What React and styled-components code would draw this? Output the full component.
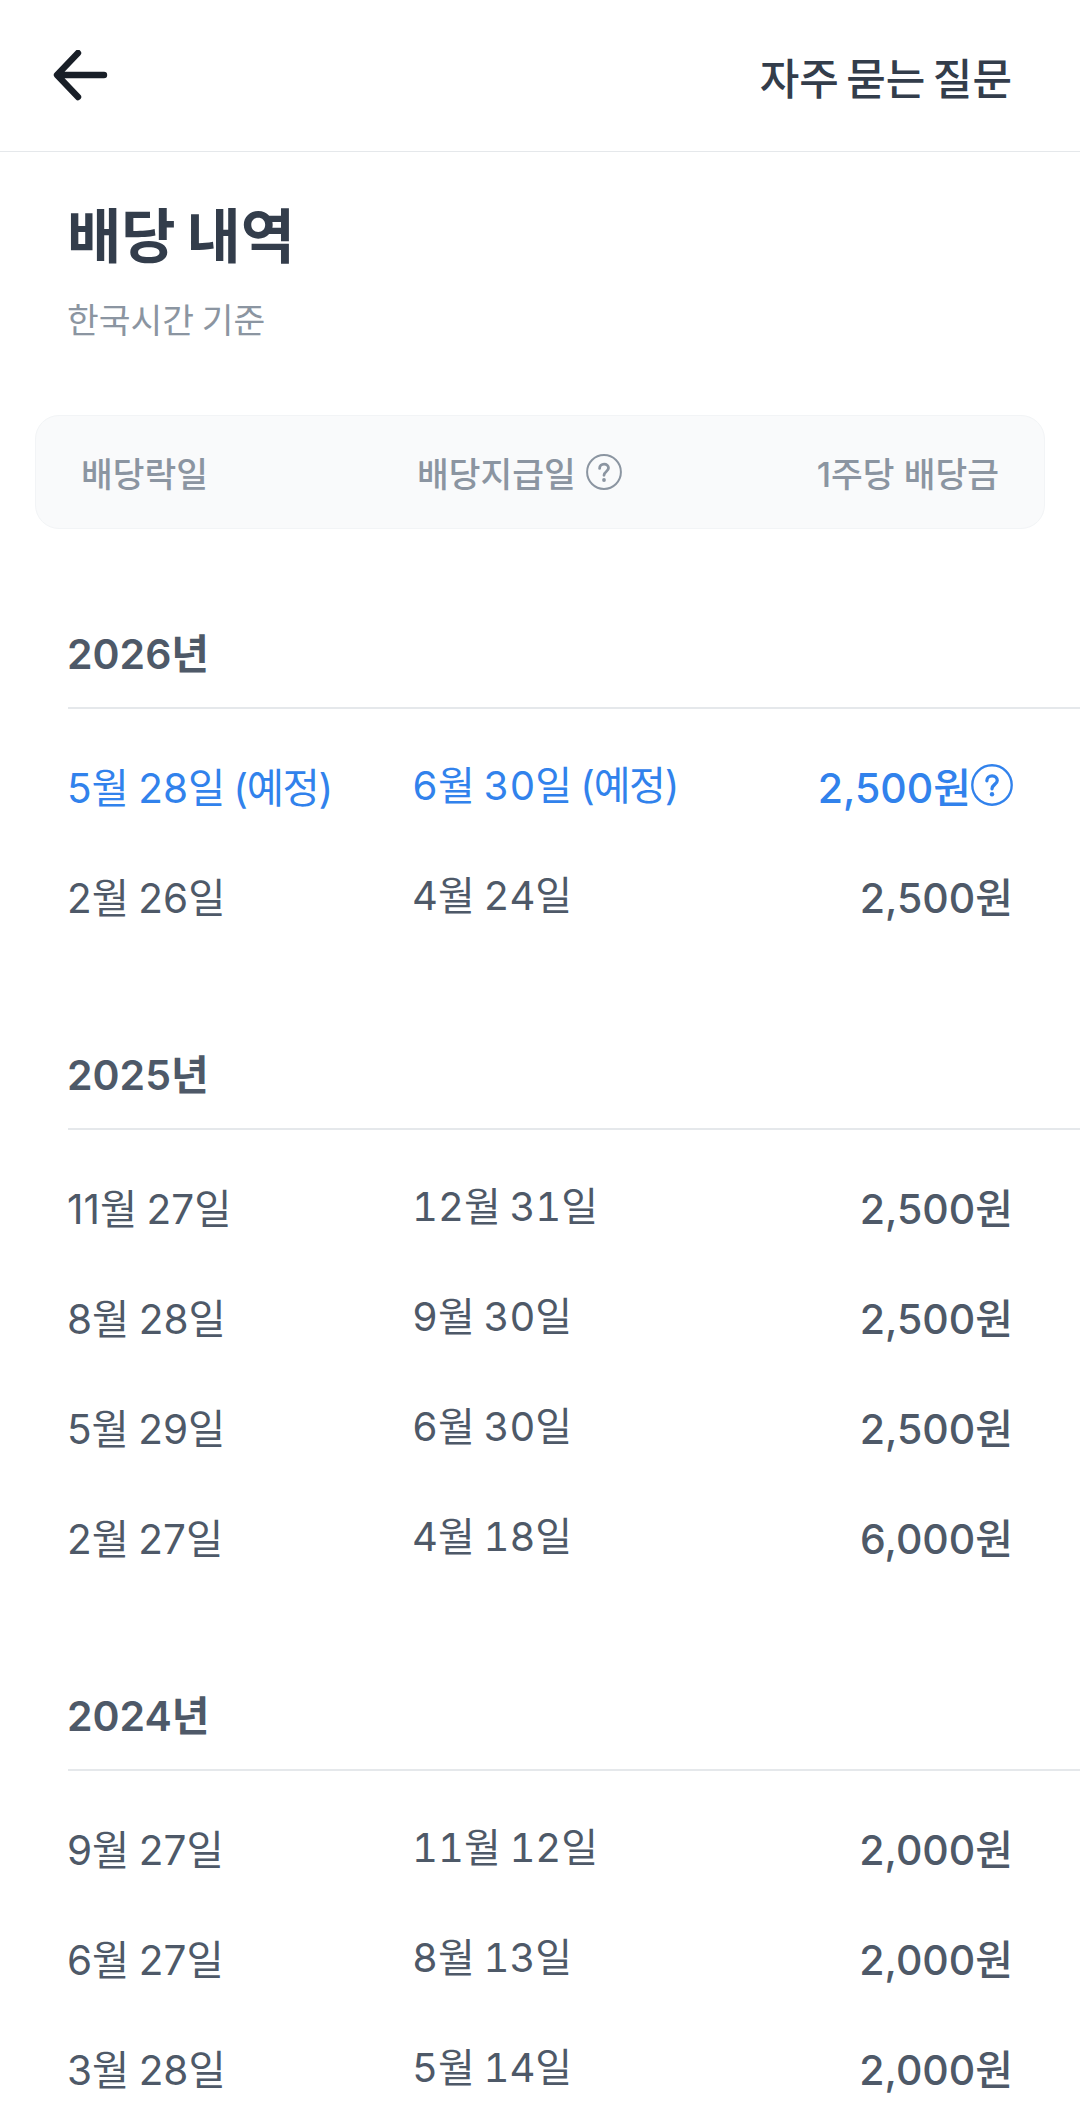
import React from 'react';
import styled, { createGlobalStyle } from 'styled-components';

const GlobalStyle = createGlobalStyle`
  html, body {
    margin: 0;
    padding: 0;
    height: 2120px;
    overflow: hidden;
    background: #fff;
    font-family: Inter, "Noto Sans CJK KR", sans-serif;
  }
`;

const sections = [
  {
    year: '2026년',
    rows: [
      { ex: '5월 28일', pay: '6월 30일', amount: '2,500원', planned: true },
      { ex: '2월 26일', pay: '4월 24일', amount: '2,500원' },
    ],
  },
  {
    year: '2025년',
    rows: [
      { ex: '11월 27일', pay: '12월 31일', amount: '2,500원' },
      { ex: '8월 28일', pay: '9월 30일', amount: '2,500원' },
      { ex: '5월 29일', pay: '6월 30일', amount: '2,500원' },
      { ex: '2월 27일', pay: '4월 18일', amount: '6,000원' },
    ],
  },
  {
    year: '2024년',
    rows: [
      { ex: '9월 27일', pay: '11월 12일', amount: '2,000원' },
      { ex: '6월 27일', pay: '8월 13일', amount: '2,000원' },
      { ex: '3월 28일', pay: '5월 14일', amount: '2,000원' },
    ],
  },
];

const HelpIcon = ({ size, color }) => (
  <svg width={size} height={size} viewBox="0 0 36 36" fill="none">
    <circle cx="18" cy="18" r="16.9" stroke={color} strokeWidth="2" />
    <path d="M13.6 14.4c0-2.5 2-4.2 4.5-4.2s4.4 1.6 4.4 3.9c0 3.4-4.5 3.4-4.5 7.2" stroke={color} strokeWidth="2.8" strokeLinecap="round" />
    <circle cx="18" cy="26" r="1.9" fill={color} />
  </svg>
);

const App = () => {
  return (
    <Page>
      <GlobalStyle />
      <Header>
        <BackButton>
          <svg width="56" height="52" viewBox="0 0 56 52" fill="none">
            <path d="M52 25H6M26 3L5 25l21 22" stroke="#191f28" strokeWidth="6.4" strokeLinecap="round" strokeLinejoin="round" />
          </svg>
        </BackButton>
        <FaqLink>자주 묻는 질문</FaqLink>
      </Header>

      <TitleBlock>
        <Title>배당 내역</Title>
        <Subtitle>한국시간 기준</Subtitle>
      </TitleBlock>

      <TableHead>
        <HeadCell>배당락일</HeadCell>
        <HeadCell>
          배당지급일
          <HelpIcon size={36} color="#8b95a1" />
        </HeadCell>
        <HeadCellRight>1주당 배당금</HeadCellRight>
      </TableHead>

      {sections.map((section) => (
        <Section key={section.year}>
          <Year>{section.year}</Year>
          <Rows>
            {section.rows.map((row) => (
              <Row key={row.ex} $planned={row.planned}>
                <DateCell>
                  {row.ex}
                  {row.planned && <Planned> (예정)</Planned>}
                </DateCell>
                <PayCell>
                  {row.pay}
                  {row.planned && <Planned> (예정)</Planned>}
                </PayCell>
                <Amount>
                  {row.amount}
                  {row.planned && <HelpIcon size={42} color="#3182ec" />}
                </Amount>
              </Row>
            ))}
          </Rows>
        </Section>
      ))}
    </Page>
  );
};

export default App;

const Page = styled.div`
  width: 1080px;
  height: 2120px;
  overflow: hidden;
  background: #fff;
`;

const Header = styled.header`
  height: 152px;
  box-sizing: border-box;
  border-bottom: 1px solid #e5e8eb;
  display: flex;
  align-items: center;
  justify-content: space-between;
  padding: 0 68px 0 52px;
`;

const BackButton = styled.div`
  display: flex;
  width: 56px;
  height: 52px;
`;

const FaqLink = styled.div`
  font-size: 43px;
  font-weight: 500;
  word-spacing: -4px;
  color: #333d4b;
`;

const TitleBlock = styled.div`
  padding: 48px 67px 0;
`;

const Title = styled.h1`
  margin: 0;
  font-size: 59px;
  line-height: 74px;
  font-weight: 700;
  word-spacing: -3px;
  color: #333d4b;
`;

const Subtitle = styled.div`
  margin-top: 24px;
  font-size: 34.5px;
  line-height: 46px;
  font-weight: 400;
  word-spacing: -2px;
  color: #8b95a1;
`;

const TableHead = styled.div`
  margin: 71px 35px 0;
  height: 114px;
  box-sizing: border-box;
  padding: 0 45px 0 45px;
  display: grid;
  grid-template-columns: 336px 1fr auto;
  align-items: center;
  background: #f9fafb;
  border: 1px solid #f2f4f6;
  border-radius: 24px;
`;

const HeadCell = styled.div`
  display: flex;
  align-items: center;
  gap: 10px;
  font-size: 34.5px;
  font-weight: 500;
  word-spacing: -3px;
  color: #8b95a1;
`;

const HeadCellRight = styled(HeadCell)`
  justify-content: flex-end;
  word-spacing: 0;
`;

const Section = styled.section`
  margin-left: 68px;
  margin-top: 100px;
`;

const Year = styled.div`
  font-size: 41px;
  line-height: 50px;
  font-weight: 600;
  color: #4e5968;
  padding-bottom: 28px;
  border-bottom: 2px solid #e5e8eb;
  text-indent: -1px;
`;

const Rows = styled.div`
  padding-top: 21px;
`;

const Row = styled.div`
  height: 110px;
  padding-right: 67px;
  display: grid;
  grid-template-columns: 346px 1fr auto;
  align-items: center;
  font-size: 40.5px;
  word-spacing: -2px;
  color: ${(p) => (p.$planned ? '#3182ec' : '#4e5968')};
`;

const DateCell = styled.div`
  margin-left: -1px;
`;

const PayCell = styled.div`
  margin-left: -2px;
  padding-bottom: 5px;
  font-size: 40px;
  font-variant-numeric: tabular-nums;
`;

const Planned = styled.span`
  letter-spacing: -1.4px;
`;

const Amount = styled.div`
  display: flex;
  align-items: center;
  font-size: 41px;
  font-weight: 500;
`;
